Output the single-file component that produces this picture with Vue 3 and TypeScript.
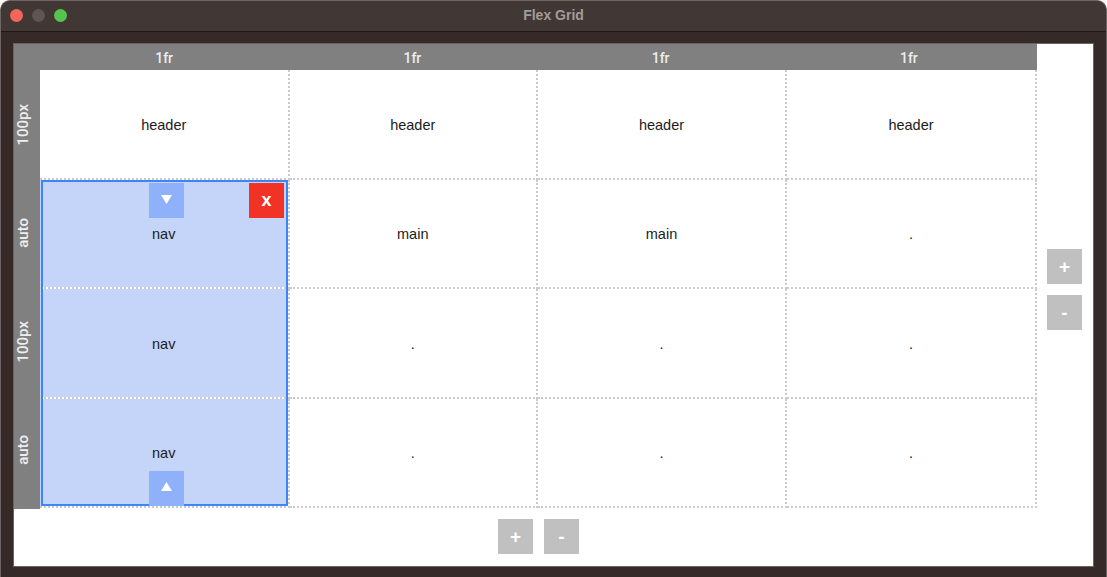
<template>
  <div class="window">
    <div class="titlebar">
      <div class="lights">
        <span class="light red" />
        <span class="light gray" />
        <span class="light green" />
      </div>
      <div class="title">Flex Grid</div>
    </div>
    <div class="content">
      <div class="editor">
        <div class="corner" />
        <div class="col-heads">
          <div v-for="(c, i) in columns" :key="i" class="col-head">{{ c }}</div>
        </div>
        <div class="row-heads">
          <div v-for="(r, i) in rows" :key="i" class="row-head"><span>{{ r }}</span></div>
        </div>
        <div class="cells">
          <div
            v-for="(cell, i) in cells"
            :key="i"
            class="cell"
            :class="{ picked: cell === 'nav' }"
          >
            {{ cell }}
          </div>
          <div class="selection">
            <button class="handle handle-top">
              <svg width="11" height="9" viewBox="0 0 11 9"><path d="M0 0H11L5.5 9Z" fill="#fff" /></svg>
            </button>
            <button class="remove">x</button>
            <button class="handle handle-bottom">
              <svg width="11" height="9" viewBox="0 0 11 9"><path d="M5.5 0L11 9H0Z" fill="#fff" /></svg>
            </button>
          </div>
        </div>
        <div class="side-actions">
          <button class="action">+</button>
          <button class="action">-</button>
        </div>
        <div class="bottom-actions">
          <button class="action">+</button>
          <button class="action">-</button>
        </div>
      </div>
    </div>
  </div>
</template>

<script setup lang="ts">
const columns: string[] = ["1fr", "1fr", "1fr", "1fr"];
const rows: string[] = ["100px", "auto", "100px", "auto"];
const cells: string[] = [
  "header", "header", "header", "header",
  "nav", "main", "main", ".",
  "nav", ".", ".", ".",
  "nav", ".", ".", ".",
];
</script>

<style>
html, body {
  margin: 0;
  background: #fff;
}
</style>

<style scoped>
.window {
  width: 1107px;
  height: 577px;
  box-sizing: border-box;
  background: #362a28;
  border-radius: 10px 10px 0 0;
  border: 1px solid #6d6664;
  border-bottom: 0;
  display: flex;
  flex-direction: column;
  font-family: "Liberation Sans", Arial, sans-serif;
  overflow: hidden;
}

.titlebar {
  height: 30px;
  flex: none;
  background: #413734;
  border-bottom: 1px solid #1e1816;
  display: flex;
  align-items: center;
  position: relative;
}
.lights {
  display: flex;
  gap: 9px;
  margin-left: 9px;
  margin-top: -1px;
}
.light {
  width: 13px;
  height: 13px;
  border-radius: 50%;
}
.red { background: #f4665c; }
.gray { background: #5e5654; }
.green { background: #56c44f; }
.title {
  position: absolute;
  left: 0;
  right: 0;
  top: 6px;
  text-align: center;
  color: #a19c9a;
  font-size: 14px;
  font-weight: 700;
  line-height: 16px;
}

.content {
  margin: 12px 13px 11px 13px;
  flex: 1;
  background: #fff;
  box-shadow: 0 0 0 1px #6b6361;
}

.editor {
  display: grid;
  grid-template-columns: 26px 997px 56px;
  grid-template-rows: 26px 438px 58px;
}
.corner {
  grid-column: 1;
  grid-row: 1;
  background: #808080;
}
.col-heads {
  grid-column: 2;
  grid-row: 1;
  display: grid;
  grid-template-columns: repeat(4, 1fr);
  padding: 2px 4px 0 0;
  background: #808080;
}
.col-head {
  display: flex;
  align-items: center;
  justify-content: center;
  color: #eeeeee;
  font-family: Roboto, "Liberation Sans", sans-serif;
  font-weight: 500;
  font-size: 14px;
}
.row-heads {
  grid-column: 1;
  grid-row: 2;
  display: grid;
  grid-template-rows: repeat(4, 1fr);
  padding: 0 8px 5px 0;
  background: #808080;
  margin-bottom: -1px;
}
.row-head {
  display: flex;
  align-items: center;
  justify-content: center;
  color: #eeeeee;
  font-family: Roboto, "Liberation Sans", sans-serif;
  font-weight: 500;
  font-size: 15px;
}
.row-head span {
  writing-mode: vertical-rl;
  transform: rotate(180deg);
}

.cells {
  grid-column: 2;
  grid-row: 2;
  position: relative;
  display: grid;
  grid-template-columns: 249.5px 248.5px 249px 250px;
  grid-template-rows: repeat(4, 1fr);
  min-width: 0;
}
.cell {
  display: flex;
  align-items: center;
  justify-content: center;
  box-sizing: border-box;
  min-width: 0;
  padding-top: 2px;
  border-right: 2px dotted #cbcbcb;
  border-bottom: 2px dotted #cbcbcb;
  color: #1c1c1c;
  font-size: 14.5px;
}
.cell.picked {
  background: #c4d5f9;
  background-clip: padding-box;
}

.selection {
  position: absolute;
  left: 1px;
  top: 110px;
  width: 247px;
  height: 326px;
  box-sizing: border-box;
  border: 2px solid #3d86f8;
}
button {
  border: 0;
  padding: 0;
  margin: 0;
  font-family: "Liberation Sans", Arial, sans-serif;
  display: flex;
  align-items: center;
  justify-content: center;
}
.handle {
  position: absolute;
  left: 106px;
  width: 35px;
  height: 35px;
  background: #8fb1fa;
}
.handle-top {
  top: 1px;
  padding-bottom: 3px;
}
.handle-bottom {
  bottom: -2px;
  padding-bottom: 4px;
}
.remove {
  position: absolute;
  right: 2px;
  top: 1px;
  width: 35px;
  height: 35px;
  background: #f03324;
  color: #fff;
  font-size: 18px;
  font-weight: 700;
  padding-bottom: 1px;
}

.side-actions {
  grid-column: 3;
  grid-row: 2;
  display: flex;
  flex-direction: column;
  justify-content: center;
  gap: 11px;
  padding: 1px 0 0 10px;
}
.bottom-actions {
  grid-column: 2;
  grid-row: 3;
  display: flex;
  justify-content: center;
  gap: 11px;
  padding-top: 11px;
  align-items: flex-start;
}
.action {
  width: 35px;
  height: 35px;
  padding-top: 1px;
  background: #c0c0c0;
  color: #fff;
  font-size: 19px;
  font-weight: 700;
}
</style>
